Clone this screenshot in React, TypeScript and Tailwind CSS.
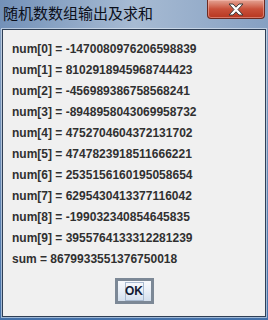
const nums = [
  "-1470080976206598839",
  "8102918945968744423",
  "-456989386758568241",
  "-8948958043069958732",
  "4752704604372131702",
  "4747823918511666221",
  "2535156160195058654",
  "6295430413377116042",
  "-199032340854645835",
  "3955764133312281239",
];

function CloseButton() {
  return (
    <div className="w-[58px] h-[19px] mr-[3px] rounded-b-[4px] border border-t-0 border-[#6b2a22] bg-gradient-to-b from-[#e3a394] via-[#c9503a] to-[#b7361f] shadow-[inset_0_0_0_1px_rgba(255,200,190,0.45)] flex items-center justify-center">
      <svg width="16" height="13" viewBox="0 0 16 13">
        <path
          d="M1 1h4l3 3.2L11 1h4l-5 5.5 5 5.5h-4l-3-3.2L5 12H1l5-5.5z"
          fill="#ffffff"
          stroke="#3b3b3b"
          strokeWidth="1"
          strokeLinejoin="round"
        />
      </svg>
    </div>
  );
}

export default function App() {
  return (
    <div className="w-[268px] h-[320px] flex flex-col bg-gradient-to-b from-[#8aa3c3] via-[#6d8cb5] to-[#4370a8] overflow-hidden">
      <div className="h-[29px] flex items-start justify-between bg-gradient-to-r from-[#7391b8] via-[#a7bbd3] to-[#86a0c2]">
        <div className="pl-[3px] leading-[25px] text-[15px] text-[#0b0f1a] font-['Noto_Sans_CJK_SC',sans-serif]">
          随机数数组输出及求和
        </div>
        <CloseButton />
      </div>
      <div className="flex-1 mx-[2px] mb-[3px] border border-[#2f3f55] shadow-[0_0_0_1px_rgba(235,242,250,0.55)] bg-[#f0f0f0] flex flex-col font-['Liberation_Sans',Arial,sans-serif] font-bold text-[12px] text-[#303030]">
        <div className="pt-[9px] pl-[9px] flex flex-col">
          {nums.map((n, i) => (
            <div key={i} className="leading-[21px] whitespace-nowrap">
              num[{i}] = {n}
            </div>
          ))}
          <div className="leading-[21px] whitespace-nowrap">sum = 8679933551376750018</div>
        </div>
        <div className="flex justify-center pt-[8px]">
          <div className="w-[39px] h-[26px] border-[3px] border-[#7c8896] bg-gradient-to-b from-[#f7f9fc] via-[#e9eff7] to-[#d3dfed] flex items-center justify-center">
            <span className="w-[19px] h-[19px] border border-[#a9bad0] flex items-center justify-center text-[12px] leading-none text-[#141a33]">
              OK
            </span>
          </div>
        </div>
      </div>
    </div>
  );
}
